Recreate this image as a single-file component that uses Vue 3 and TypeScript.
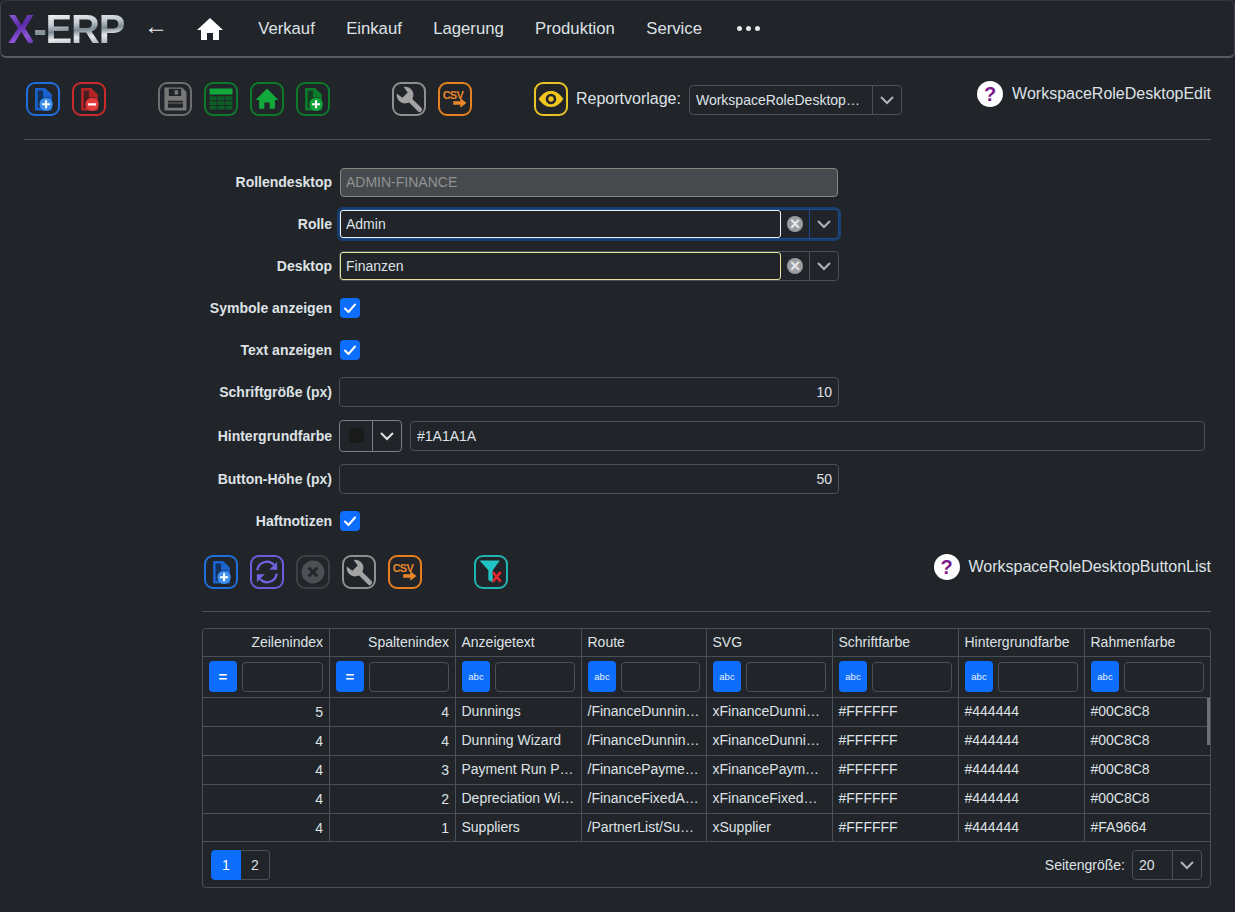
<script setup lang="ts">
interface Tool {
  icon: string
  color: string
  gap?: number
}

const navItems = ['Verkauf', 'Einkauf', 'Lagerung', 'Produktion', 'Service']

const topTools: Tool[] = [
  { icon: 'doc-plus', color: '#1f6fdc' },
  { icon: 'doc-minus', color: '#c92a2a' },
  { icon: 'save', color: '#6e6e6e', gap: 40 },
  { icon: 'table', color: '#0d7a2b' },
  { icon: 'home', color: '#0d7a2b' },
  { icon: 'doc-plus-green', color: '#0d7a2b' },
  { icon: 'wrench', color: '#8f8f8f', gap: 50 },
  { icon: 'csv', color: '#e5801e' },
]

const listTools: Tool[] = [
  { icon: 'doc-plus', color: '#1f6fdc' },
  { icon: 'refresh', color: '#6a5fd8' },
  { icon: 'cancel', color: '#3c4044' },
  { icon: 'wrench', color: '#8f8f8f' },
  { icon: 'csv', color: '#e5801e' },
  { icon: 'filter', color: '#1fb5b5', gap: 40 },
]

const columns = [
  { title: 'Zeilenindex', num: true, width: 126.5 },
  { title: 'Spaltenindex', num: true, width: 126 },
  { title: 'Anzeigetext', width: 126 },
  { title: 'Route', width: 125 },
  { title: 'SVG', width: 126 },
  { title: 'Schriftfarbe', width: 126 },
  { title: 'Hintergrundfarbe', width: 126 },
  { title: 'Rahmenfarbe', width: 125.5 },
]

const rows = [
  [5, 4, 'Dunnings', '/FinanceDunning/List', 'xFinanceDunnings', '#FFFFFF', '#444444', '#00C8C8'],
  [4, 4, 'Dunning Wizard', '/FinanceDunning/Wizard', 'xFinanceDunningWizard', '#FFFFFF', '#444444', '#00C8C8'],
  [4, 3, 'Payment Run Proposal', '/FinancePaymentRun', 'xFinancePaymentRun', '#FFFFFF', '#444444', '#00C8C8'],
  [4, 2, 'Depreciation Wizard', '/FinanceFixedAssets', 'xFinanceFixedAssets', '#FFFFFF', '#444444', '#00C8C8'],
  [4, 1, 'Suppliers', '/PartnerList/Suppliers', 'xSupplier', '#FFFFFF', '#444444', '#FA9664'],
]
</script>

<template>
  <svg class="sprite" xmlns="http://www.w3.org/2000/svg">
    <symbol id="doc-plus" viewBox="0 0 34 34">
      <path d="M8 4.500h11.500L27 12v18H8z" fill="#1a62cc" />
      <path d="M11 7.500h6v7.500h7v2.500L14 19v8h-3z" fill="#14315e" />
      <circle cx="20.500" cy="23" r="7.500" fill="#3d8ff0" />
      <path d="M20.500 18.500v9M16 23h9" stroke="#fff" stroke-width="2.400" />
    </symbol>
    <symbol id="doc-minus" viewBox="0 0 34 34">
      <path d="M8 4.500h11.500L27 12v18H8z" fill="#b52424" />
      <path d="M11 7.500h6v7.500h7v2.500L14 19v8h-3z" fill="#4a1e20" />
      <circle cx="20.500" cy="23" r="7.500" fill="#e23c3c" />
      <path d="M16 23h9" stroke="#fff" stroke-width="2.600" />
    </symbol>
    <symbol id="doc-plus-green" viewBox="0 0 34 34">
      <path d="M8 4.500h11.500L27 12v18H8z" fill="#0c7d2a" />
      <path d="M11 7.500h6v7.500h7v2.500L14 19v8h-3z" fill="#153f24" />
      <circle cx="20.500" cy="23" r="7.500" fill="#12a53b" />
      <path d="M20.500 18.500v9M16 23h9" stroke="#fff" stroke-width="2.400" />
    </symbol>
    <symbol id="save" viewBox="0 0 34 34">
      <path fill-rule="evenodd" d="M5 4h20l5 5v21H5zM10 5.500v8h14v-8zM16.500 7h4v5h-4zM9 19v8h17v-8z" fill="#777" />
      <path d="M9 21.500h17" stroke="#777" stroke-width="1" />
    </symbol>
    <symbol id="table" viewBox="0 0 34 34">
      <path d="M4 5h26v7H4z" fill="#11a83c" />
      <path d="M4 14h8v4.500H4zM13 14h8v4.500h-8zM22 14h8v4.500h-8zM4 19.500h8V24H4zM13 19.500h8V24h-8zM22 19.500h8V24h-8zM4 25h8v4H4zM13 25h8v4h-8zM22 25h8v4h-8z" fill="#0b5f24" />
    </symbol>
    <symbol id="home" viewBox="0 0 34 34">
      <path d="M17 5 30 18h-4v10h-6v-7h-6v7H8V18H4z" fill="#11a83c" />
    </symbol>
    <symbol id="wrench" viewBox="0 0 34 34">
      <circle cx="12.500" cy="12.500" r="9.500" fill="#a3a3a3" />
      <path d="m14 14 15 15" stroke="#a3a3a3" stroke-width="5.500" stroke-linecap="round" />
      <path d="M8.500 0 0 8.500l9.500 7 6-6z" fill="#212529" />
    </symbol>
    <symbol id="csv" viewBox="0 0 34 34">
      <text x="3" y="16.500" font-family="Liberation Sans, sans-serif" font-size="12.500" font-weight="700" fill="#e8862a" textLength="24">CSV</text>
      <path d="M15 19.500h8V16l7 5.500-7 5.500v-3.500h-8z" fill="#e8862a" />
    </symbol>
    <symbol id="eye" viewBox="0 0 34 34">
      <path d="M3 17C8 9.500 13 8 17 8s9 1.500 14 9c-5 7.500-10 9-14 9s-9-1.500-14-9z" fill="#f0c61e" />
      <circle cx="17" cy="17" r="6" fill="#212529" />
      <circle cx="17" cy="17" r="3" fill="#f0c61e" />
    </symbol>
    <symbol id="refresh" viewBox="0 0 34 34">
      <path d="M6 15a11 11 0 0 1 19-6" fill="none" stroke="#6f64e0" stroke-width="2.600" />
      <path d="M28.500 5.500v9h-9z" fill="#6f64e0" />
      <path d="M28 19a11 11 0 0 1-19 6" fill="none" stroke="#6f64e0" stroke-width="2.600" />
      <path d="M5.500 28.500v-9h9z" fill="#6f64e0" />
    </symbol>
    <symbol id="cancel" viewBox="0 0 34 34">
      <circle cx="17" cy="17" r="13" fill="#4c5054" />
      <path d="m12 12 10 10m0-10L12 22" stroke="#24282c" stroke-width="3.600" />
    </symbol>
    <symbol id="filter" viewBox="0 0 34 34">
      <path d="M4 4h23l-8 11v14l-5-3V15z" fill="#20c4c4" />
      <path d="m19 17 9 11m0-11-9 11" stroke="#e5262d" stroke-width="3" />
    </symbol>
  </svg>

  <div class="page">
    <nav class="navbar">
      <div class="logo"><span class="logo-x">X</span><span class="logo-rest">-ERP</span></div>
      <span class="back">←</span>
      <svg class="nav-home" viewBox="0 0 26 24"><path d="M13 1 26 13h-4v10h-6v-7h-6v7H4V13H0z" fill="#fff" /></svg>
      <a v-for="item in navItems" :key="item" class="nav-link">{{ item }}</a>
      <span class="dots"><i></i><i></i><i></i></span>
    </nav>

    <main class="content">
      <div class="toolbar top">
        <svg
          v-for="t in topTools"
          :key="t.icon"
          class="tool"
          :style="{ borderColor: t.color, marginLeft: (t.gap ?? 0) + 'px' }"
        ><use :href="'#' + t.icon" /></svg>
        <svg class="tool eye" style="border-color: #e8c527"><use href="#eye" /></svg>
        <span class="report-label">Reportvorlage:</span>
        <div class="select report">
          <span class="select-text">WorkspaceRoleDesktopEditReport</span>
          <span class="chev-box"><svg class="chev" viewBox="0 0 16 16"><path d="m2 5 6 6 6-6" /></svg></span>
        </div>
        <div class="help top-help">
          <span class="help-icon">?</span>
          <span>WorkspaceRoleDesktopEdit</span>
        </div>
      </div>
      <div class="rule"></div>

      <form class="form" @submit.prevent>
        <div class="row">
          <label>Rollendesktop</label>
          <input class="field disabled" value="ADMIN-FINANCE" disabled />
        </div>
        <div class="row">
          <label>Rolle</label>
          <div class="combo focused">
            <input class="combo-input white" value="Admin" />
            <span class="clear"><i>×</i></span>
            <span class="chev-box"><svg class="chev" viewBox="0 0 16 16"><path d="m2 5 6 6 6-6" /></svg></span>
          </div>
        </div>
        <div class="row">
          <label>Desktop</label>
          <div class="combo">
            <input class="combo-input yellow" value="Finanzen" />
            <span class="clear"><i>×</i></span>
            <span class="chev-box"><svg class="chev" viewBox="0 0 16 16"><path d="m2 5 6 6 6-6" /></svg></span>
          </div>
        </div>
        <div class="row">
          <label>Symbole anzeigen</label>
          <span class="check"><svg viewBox="0 0 20 20"><path d="m5 10.500 3.500 3.500L15 6.500" /></svg></span>
        </div>
        <div class="row">
          <label>Text anzeigen</label>
          <span class="check"><svg viewBox="0 0 20 20"><path d="m5 10.500 3.500 3.500L15 6.500" /></svg></span>
        </div>
        <div class="row">
          <label>Schriftgröße (px)</label>
          <input class="field num" value="10" />
        </div>
        <div class="row color-row">
          <label>Hintergrundfarbe</label>
          <div class="color-pick">
            <span class="swatch-box"><i></i></span>
            <span class="chev-box"><svg class="chev light" viewBox="0 0 16 16"><path d="m2 5 6 6 6-6" /></svg></span>
          </div>
          <input class="field hex" value="#1A1A1A" />
        </div>
        <div class="row">
          <label>Button-Höhe (px)</label>
          <input class="field num" value="50" />
        </div>
        <div class="row">
          <label>Haftnotizen</label>
          <span class="check"><svg viewBox="0 0 20 20"><path d="m5 10.500 3.500 3.500L15 6.500" /></svg></span>
        </div>
      </form>

      <section class="list">
        <div class="toolbar list-bar">
          <svg
            v-for="t in listTools"
            :key="t.icon"
            class="tool"
            :style="{ borderColor: t.color, marginLeft: (t.gap ?? 0) + 'px' }"
          ><use :href="'#' + t.icon" /></svg>
          <div class="help list-help">
            <span class="help-icon">?</span>
            <span>WorkspaceRoleDesktopButtonList</span>
          </div>
        </div>
        <div class="rule list-rule"></div>

        <div class="grid">
          <div class="grid-scroll">
            <table>
              <colgroup>
                <col v-for="c in columns" :key="c.title" :style="{ width: c.width + 'px' }" />
              </colgroup>
              <thead>
                <tr class="head">
                  <th v-for="c in columns" :key="c.title" :class="{ right: c.num }">{{ c.title }}</th>
                </tr>
                <tr class="filters">
                  <th v-for="c in columns" :key="c.title">
                    <div class="filter">
                      <span class="op" :class="{ eq: c.num }">{{ c.num ? '=' : 'abc' }}</span>
                      <input class="filter-input" />
                    </div>
                  </th>
                </tr>
              </thead>
              <tbody>
                <tr v-for="(row, i) in rows" :key="i">
                  <td v-for="(cell, j) in row" :key="j" :class="{ right: j < 2 }">{{ cell }}</td>
                </tr>
              </tbody>
            </table>
            <span class="scrollbar"></span>
          </div>
          <div class="pager">
            <div class="pages">
              <span class="page-btn active">1</span>
              <span class="page-btn">2</span>
            </div>
            <span class="size-label">Seitengröße:</span>
            <div class="select size">
              <span class="select-text">20</span>
              <span class="chev-box"><svg class="chev" viewBox="0 0 16 16"><path d="m2 5 6 6 6-6" /></svg></span>
            </div>
          </div>
        </div>
      </section>
    </main>
  </div>
</template>

<style>
html,
body {
  background: #212529;
}
</style>

<style scoped>
.sprite {
  display: none;
}

.page {
  width: 1235px;
  height: 912px;
  overflow: hidden;
  background: #212529;
  color: #dee2e6;
  font-family: "Liberation Sans", Arial, sans-serif;
  font-size: 14px;
}

.navbar {
  display: flex;
  align-items: center;
  height: 58px;
  box-sizing: border-box;
  padding-left: 7px;
  border: 1px solid #40454a;
  border-bottom: 2px solid #565b60;
  border-top-color: #33373b;
  border-radius: 6px;
}

.logo {
  width: 116px;
  font-size: 40px;
  font-weight: 700;
  line-height: 44px;
  letter-spacing: -1.2px;
  white-space: nowrap;
  filter: blur(0.4px);
}

.logo-x {
  background: linear-gradient(155deg, #9a6ae0 10%, #5a2aa8 42%, #8e58d8 68%, #43208a 100%);
  -webkit-background-clip: text;
  background-clip: text;
  color: transparent;
}

.logo-rest {
  background: linear-gradient(175deg, #eef1f3 18%, #c3cad0 38%, #7d8a94 52%, #e6eaed 66%, #9aa5ad 86%);
  -webkit-background-clip: text;
  background-clip: text;
  color: transparent;
}

.back {
  margin-left: 20px;
  margin-bottom: 6px;
  width: 20px;
  font-size: 24px;
  line-height: 24px;
  color: #e6e6e6;
}

.nav-home {
  width: 26px;
  height: 24px;
  margin-left: 33px;
  margin-right: 19.500px;
}

.nav-link {
  padding: 0 15.700px;
  font-size: 16.700px;
  color: #dee2e6;
}

.dots {
  display: flex;
  gap: 4px;
  margin-left: 19px;
}

.dots i {
  width: 5px;
  height: 5px;
  border-radius: 50%;
  background: #e6e6e6;
}

.content {
  padding: 0 24px;
}

.toolbar {
  display: flex;
  align-items: center;
}

.top {
  height: 34px;
  margin-top: 24px;
  padding-left: 2px;
}

.tool {
  width: 34px;
  height: 34px;
  box-sizing: border-box;
  margin-right: 12px;
  border: 2px solid;
  border-radius: 9px;
  flex: none;
}

.tool.eye {
  margin-left: 50px;
  margin-right: 8px;
}

.report-label {
  font-size: 16px;
  margin-right: 8px;
}

.select {
  display: flex;
  align-items: center;
  height: 30px;
  box-sizing: border-box;
  border: 1px solid #495057;
  border-radius: 4px;
}

.report {
  width: 213px;
  margin-top: 1px;
}

.select-text {
  flex: 1;
  min-width: 0;
  padding: 0 11px 0 6px;
  overflow: hidden;
  white-space: nowrap;
  text-overflow: ellipsis;
}

.chev-box {
  display: flex;
  align-items: center;
  justify-content: center;
  width: 29px;
  height: 100%;
  border-left: 1px solid #495057;
  box-sizing: border-box;
  flex: none;
}

.chev {
  width: 16px;
  height: 16px;
  fill: none;
  stroke: #adb5bd;
  stroke-width: 2;
}

.chev.light {
  stroke: #dee2e6;
}

.help {
  display: flex;
  align-items: center;
  gap: 9px;
  margin-left: auto;
  font-size: 16px;
}

.top-help {
  margin-top: -10px;
}

.help-icon {
  display: flex;
  align-items: center;
  justify-content: center;
  width: 26px;
  height: 26px;
  border-radius: 50%;
  background: #fff;
  color: #7b1d8e;
  font-size: 20px;
  font-weight: 700;
}

.rule {
  height: 1px;
  margin-top: 23px;
  background: #4b5055;
}

.form {
  margin-top: 21px;
}

.row {
  display: flex;
  align-items: center;
  height: 42px;
}

.color-row {
  height: 45px;
}

label {
  width: 308px;
  margin-right: 7px;
  text-align: right;
  font-weight: 700;
  flex: none;
}

.field {
  width: 500px;
  height: 30px;
  box-sizing: border-box;
  padding: 0 6px;
  border: 1px solid #495057;
  border-radius: 4px;
  background: transparent;
  color: #dee2e6;
  font: inherit;
  outline: none;
}

.field.disabled {
  height: 29px;
  margin-left: 1px;
  width: 498px;
  padding: 0 5px;
  border: 1.500px solid #85877d;
  background: #474a4c;
  color: #8f9294;
}

.field.num {
  text-align: right;
  padding-right: 6px;
}

.field.hex {
  width: 795px;
  margin-left: 8px;
}

.combo {
  display: flex;
  align-items: stretch;
  width: 500px;
  height: 30px;
  box-sizing: border-box;
  border: 1px solid #495057;
  border-radius: 4px;
}

.combo.focused {
  border-color: #1b4b8f;
  box-shadow: 0 0 0 2px #1a3e70;
}

.combo-input {
  width: 441px;
  box-sizing: border-box;
  padding: 0 5px;
  background: #212529;
  border: 1px solid;
  border-radius: 3px;
  color: #dee2e6;
  font: inherit;
  outline: none;
  flex: none;
}

.combo-input.white {
  border-color: #f0f4f8;
}

.combo-input.yellow {
  border-color: #e6e2a4;
}

.clear {
  display: flex;
  align-items: center;
  justify-content: center;
  flex: 1;
}

.clear i {
  display: flex;
  align-items: center;
  justify-content: center;
  width: 16px;
  height: 16px;
  border-radius: 50%;
  background: #9a9da1;
  color: #e4e6e8;
  font-size: 18px;
  font-style: normal;
  font-weight: 700;
  line-height: 16px;
}

.combo .chev-box {
  border-color: #495057;
}

.combo.focused .chev-box {
  border-color: #1b4b8f;
}

.check {
  display: flex;
  width: 20px;
  height: 20px;
  margin-left: 1px;
  border-radius: 4px;
  background: #0d6efd;
}

.check path {
  fill: none;
  stroke: #fff;
  stroke-width: 2;
  stroke-linecap: round;
  stroke-linejoin: round;
}

.color-pick {
  display: flex;
  width: 63px;
  height: 32px;
  box-sizing: border-box;
  border: 1px solid #7a8086;
  border-radius: 4px;
  flex: none;
}

.color-pick .chev-box {
  border-color: #7a8086;
}

.swatch-box {
  display: flex;
  align-items: center;
  justify-content: center;
  flex: 1;
}

.swatch-box i {
  width: 15px;
  height: 15px;
  border-radius: 3px;
  background: #1a1a1a;
}

.list {
  margin-left: 178px;
  margin-top: 13px;
}

.list-bar {
  height: 34px;
  padding-left: 2px;
}

.list-help {
  margin-top: -10px;
}

.list-rule {
  margin-top: 22px;
}

.grid {
  margin-top: 16px;
  border: 1px solid #495057;
  border-radius: 4px;
}

.grid-scroll {
  position: relative;
  height: 212px;
  overflow: hidden;
}

table {
  width: 1007px;
  table-layout: fixed;
  border-collapse: collapse;
}

th,
td {
  box-sizing: border-box;
  padding: 0 6px 0 5.500px;
  border: 1px solid #495057;
  font-weight: 400;
  text-align: left;
  overflow: hidden;
  white-space: nowrap;
  text-overflow: ellipsis;
}

tr > :first-child {
  border-left: 0;
}

tr > :last-child {
  border-right: 0;
}

thead tr:first-child th {
  border-top: 0;
}

.right {
  padding: 0 6px 0 5px;
  text-align: right;
}

.head th {
  height: 27px;
  padding-bottom: 1px;
}

.filters th {
  height: 41px;
  padding: 0 6px 0 6px;
}

tbody td {
  height: 29px;
  padding-bottom: 2px;
}

.filter {
  display: flex;
  align-items: center;
  gap: 5px;
}

.op {
  display: flex;
  align-items: center;
  justify-content: center;
  width: 28px;
  height: 31px;
  border-radius: 4px;
  background: #0d6efd;
  color: #e8f0ff;
  font-size: 9.500px;
  flex: none;
}

.op.eq {
  font-size: 15px;
  font-weight: 700;
  color: #fff;
}

.filter-input {
  flex: 1;
  min-width: 0;
  height: 30px;
  box-sizing: border-box;
  border: 1px solid #495057;
  border-radius: 4px;
  background: transparent;
  outline: none;
}

.scrollbar {
  position: absolute;
  top: 69px;
  right: 0;
  width: 3px;
  height: 47px;
  background: #6b7076;
}

.pager {
  display: flex;
  align-items: center;
  height: 46px;
  padding: 0 8px;
  border-top: 1px solid #495057;
  box-sizing: border-box;
}

.pages {
  display: flex;
}

.page-btn {
  display: flex;
  align-items: center;
  justify-content: center;
  width: 29px;
  height: 30px;
  box-sizing: border-box;
  border: 1px solid #495057;
  border-left: 0;
  border-radius: 0 4px 4px 0;
}

.page-btn.active {
  width: 30px;
  border: 1px solid #0d6efd;
  border-radius: 4px 0 0 4px;
  background: #0d6efd;
  color: #fff;
}

.size-label {
  margin-left: auto;
  margin-right: 7px;
}

.size {
  width: 70px;
}
</style>
